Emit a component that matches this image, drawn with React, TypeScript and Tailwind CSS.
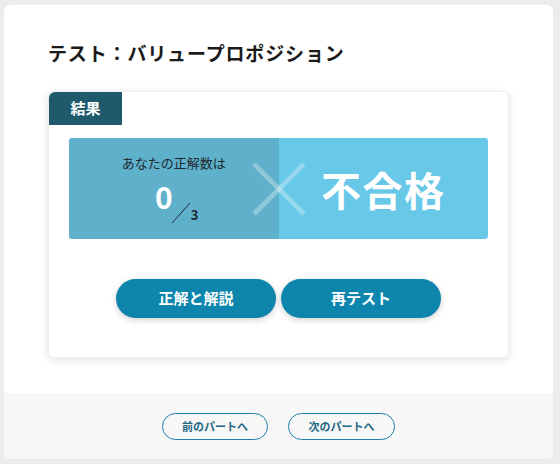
export default function App() {
  return (
    <div
      className="w-[560px] h-[464px] bg-[#ececec] pt-[5px] pl-[4px]"
      style={{ fontFamily: '"Noto Sans CJK JP", "Noto Sans", sans-serif' }}
    >
      <div className="w-[549px] bg-white rounded-[6px] overflow-hidden flex flex-col h-[454px]">
        {/* Main */}
        <div className="px-[44px] pt-[34px] h-[388px]">
          <h1 className="text-[19px] font-bold text-[#1a1a1a] leading-[28px] tracking-[0.85px]">
            テスト：バリュープロポジション
          </h1>

          <div className="mt-[24px] bg-white rounded-[6px] shadow-[0_2px_8px_rgba(0,0,0,0.12)] border border-[#f0f0f0] h-[267px]">
            <div className="w-[73px] h-[33px] bg-[#1e5a6c] rounded-tl-[6px] flex items-center justify-center text-white text-[15px] font-bold">
              結果
            </div>

            <div className="mx-[20px] mt-[13px] h-[101px] rounded-[3px] overflow-hidden flex relative">
              <div className="w-1/2 bg-[#5eb0cb] flex flex-col items-center pt-[16px]">
                <div className="text-[13px] text-[#1f2a30] leading-[18px]">あなたの正解数は</div>
                <div className="flex items-end mt-[4px] pl-[6px]">
                  <span className="text-[30px] font-bold text-white leading-[40px]">0</span>
                  <svg width="20" height="22" viewBox="0 0 20 22" className="-mb-[8px] -ml-[2px]">
                    <line x1="1" y1="21" x2="19" y2="1" stroke="#1f2a30" strokeWidth="1" />
                  </svg>
                  <span className="text-[13px] font-bold text-[#1f2a30] leading-[16px] -mb-[7px]">3</span>
                </div>
              </div>
              <div className="w-1/2 bg-[#68c8e7] flex items-center justify-center">
                <span className="text-[40px] font-bold text-white leading-[50px] tracking-[1.5px]">不合格</span>
              </div>
              <svg
                width="56"
                height="56"
                viewBox="0 0 56 56"
                className="absolute left-[182px] top-[23px]"
              >
                <line x1="3" y1="3" x2="53" y2="53" stroke="rgba(255,255,255,0.3)" strokeWidth="5" />
                <line x1="53" y1="3" x2="3" y2="53" stroke="rgba(255,255,255,0.3)" strokeWidth="5" />
              </svg>
            </div>

            <div className="flex justify-center gap-[5px] mt-[40px]">
              <button className="w-[160px] h-[39px] rounded-full bg-[#0e85ad] text-white text-[15px] font-bold shadow-[0_2px_6px_rgba(0,0,0,0.18)]">
                正解と解説
              </button>
              <button className="w-[160px] h-[39px] rounded-full bg-[#0e85ad] text-white text-[15px] font-bold shadow-[0_2px_6px_rgba(0,0,0,0.18)]">
                再テスト
              </button>
            </div>
          </div>
        </div>

        {/* Footer */}
        <div className="flex-1 bg-[#f7f7f7] flex justify-center items-start pt-[20px] gap-[20px]">
          <button className="w-[106px] h-[27px] rounded-full border border-[#1a80a5] text-[#1f6883] text-[11px] font-bold">
            前のパートへ
          </button>
          <button className="w-[107px] h-[27px] rounded-full border border-[#1a80a5] text-[#1f6883] text-[11px] font-bold">
            次のパートへ
          </button>
        </div>
      </div>
    </div>
  );
}
